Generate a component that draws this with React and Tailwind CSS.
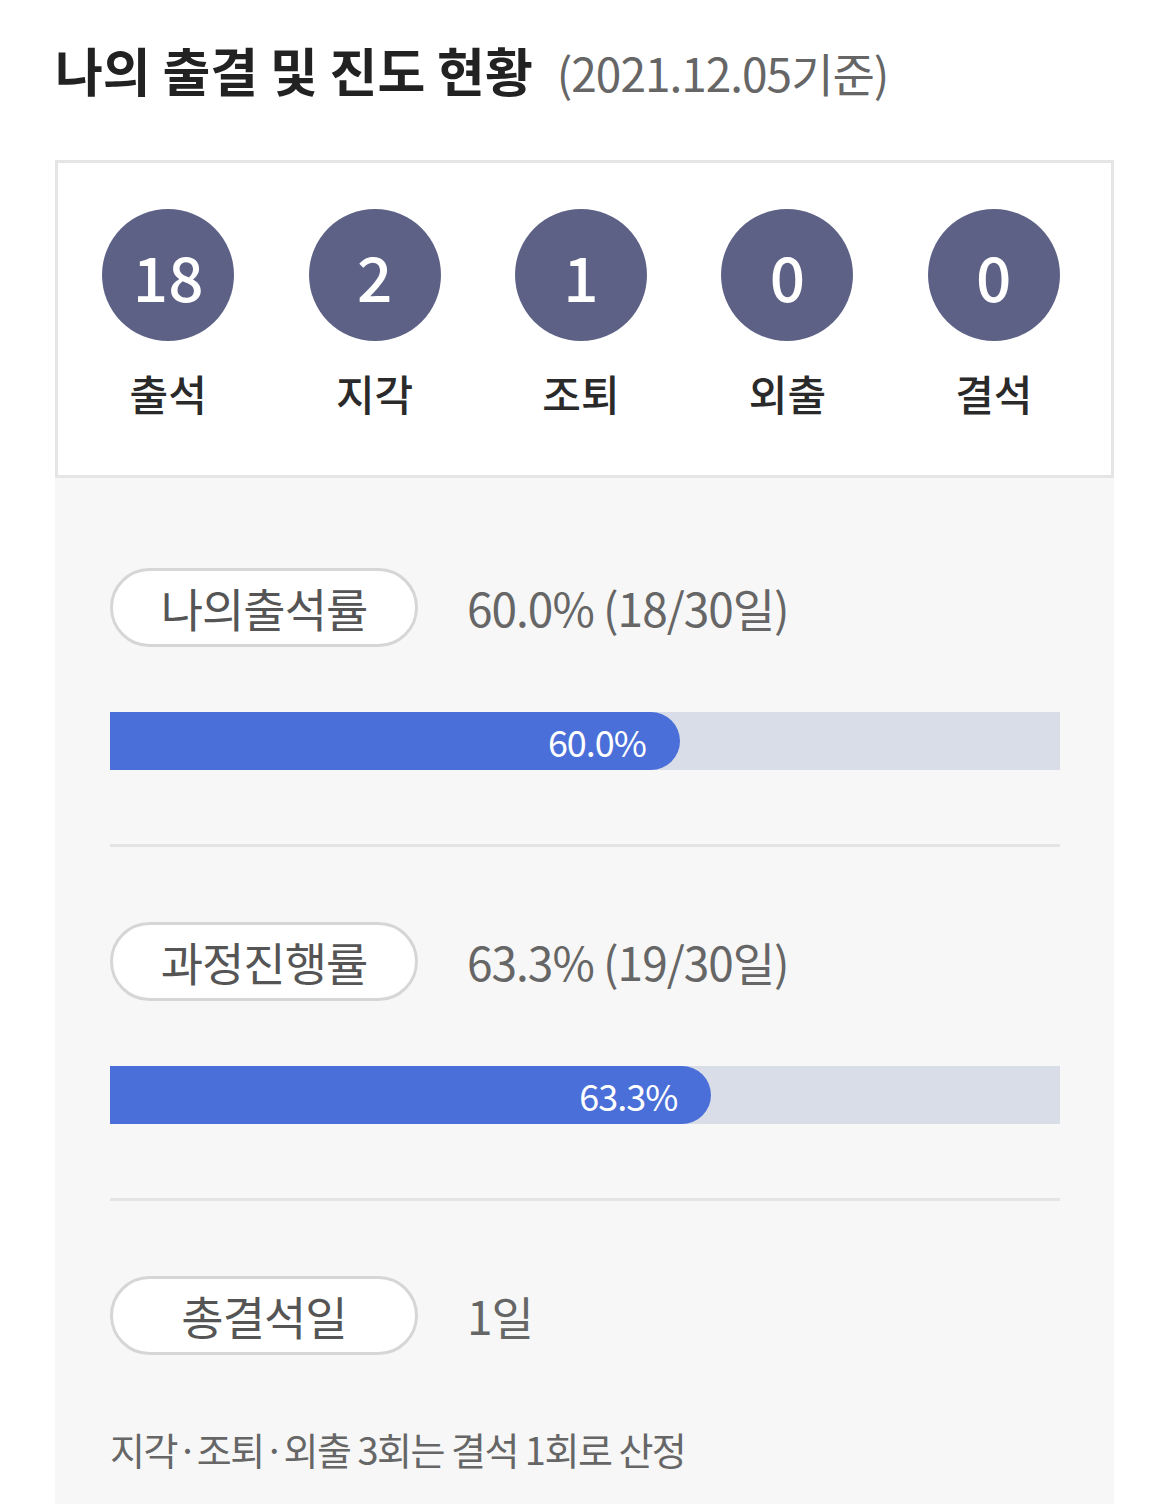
const counts = [
  { value: 18, label: '출석' },
  { value: 2, label: '지각' },
  { value: 1, label: '조퇴' },
  { value: 0, label: '외출' },
  { value: 0, label: '결석' },
]

const rates = [
  { title: '나의출석률', summary: '60.0% (18/30일)', percent: 60.0 },
  { title: '과정진행률', summary: '63.3% (19/30일)', percent: 63.3 },
]

function Pill({ children }) {
  return (
    <div className="flex h-[79px] w-[308px] shrink-0 items-center justify-center rounded-full border-[3px] border-[#d6d6d6] bg-white text-[46px] tracking-[-1px] text-[#555]">
      {children}
    </div>
  )
}

function RateBlock({ title, summary, percent }) {
  return (
    <div>
      <div className="flex items-center">
        <Pill>{title}</Pill>
        <span className="ml-[49px] text-[46px] tracking-[-1px] text-[#666]">{summary}</span>
      </div>
      <div className="mt-[65px] h-[58px] w-full bg-[#d9dde8]">
        <div
          className="flex h-full items-center justify-end rounded-r-full bg-[#4a6fd8] pr-[34px] text-[36px] tracking-[-1px] text-white"
          style={{ width: `${percent}%` }}
        >
          {percent.toFixed(1)}%
        </div>
      </div>
    </div>
  )
}

export default function App() {
  return (
    <div className="min-h-screen bg-white px-[55px] pt-[35px] font-['Noto_Sans_CJK_KR',sans-serif]">
      <h1 className="flex items-baseline">
        <span className="text-[52px] font-bold leading-[70px] text-[#222]">나의 출결 및 진도 현황</span>
        <span className="ml-[24px] text-[46px] tracking-[-1px] text-[#666]">(2021.12.05기준)</span>
      </h1>

      <div className="mt-[53px] w-[1059px] border-[3px] border-[#e5e5e5] bg-white pt-[46px] pb-[52px] pl-[7px]">
        <div className="grid w-[1032px] grid-cols-5">
          {counts.map((item) => (
            <div key={item.label} className="flex flex-col items-center">
              <div className="flex h-[132px] w-[132px] items-center justify-center rounded-full bg-[#5d6185] text-[62px] font-medium text-white">
                {item.value}
              </div>
              <div className="mt-[22px] text-[42px] font-medium leading-[60px] text-[#2a2a2a]">{item.label}</div>
            </div>
          ))}
        </div>
      </div>

      <div className="w-[1059px] bg-[#f7f7f7] pl-[55px] pr-[54px] pt-[90px] pb-[40px]">
        {rates.map((rate) => (
          <div key={rate.title}>
            <RateBlock {...rate} />
            <div className="mt-[74px] mb-[75px] h-[3px] w-full bg-[#e4e4e4]" />
          </div>
        ))}

        <div className="flex items-center">
          <Pill>총결석일</Pill>
          <span className="ml-[49px] text-[46px] tracking-[-1px] text-[#666]">1일</span>
        </div>

        <p className="mt-[65px] text-[38px] tracking-[-1.5px] text-[#666]">지각·조퇴·외출 3회는 결석 1회로 산정</p>
      </div>
    </div>
  )
}
